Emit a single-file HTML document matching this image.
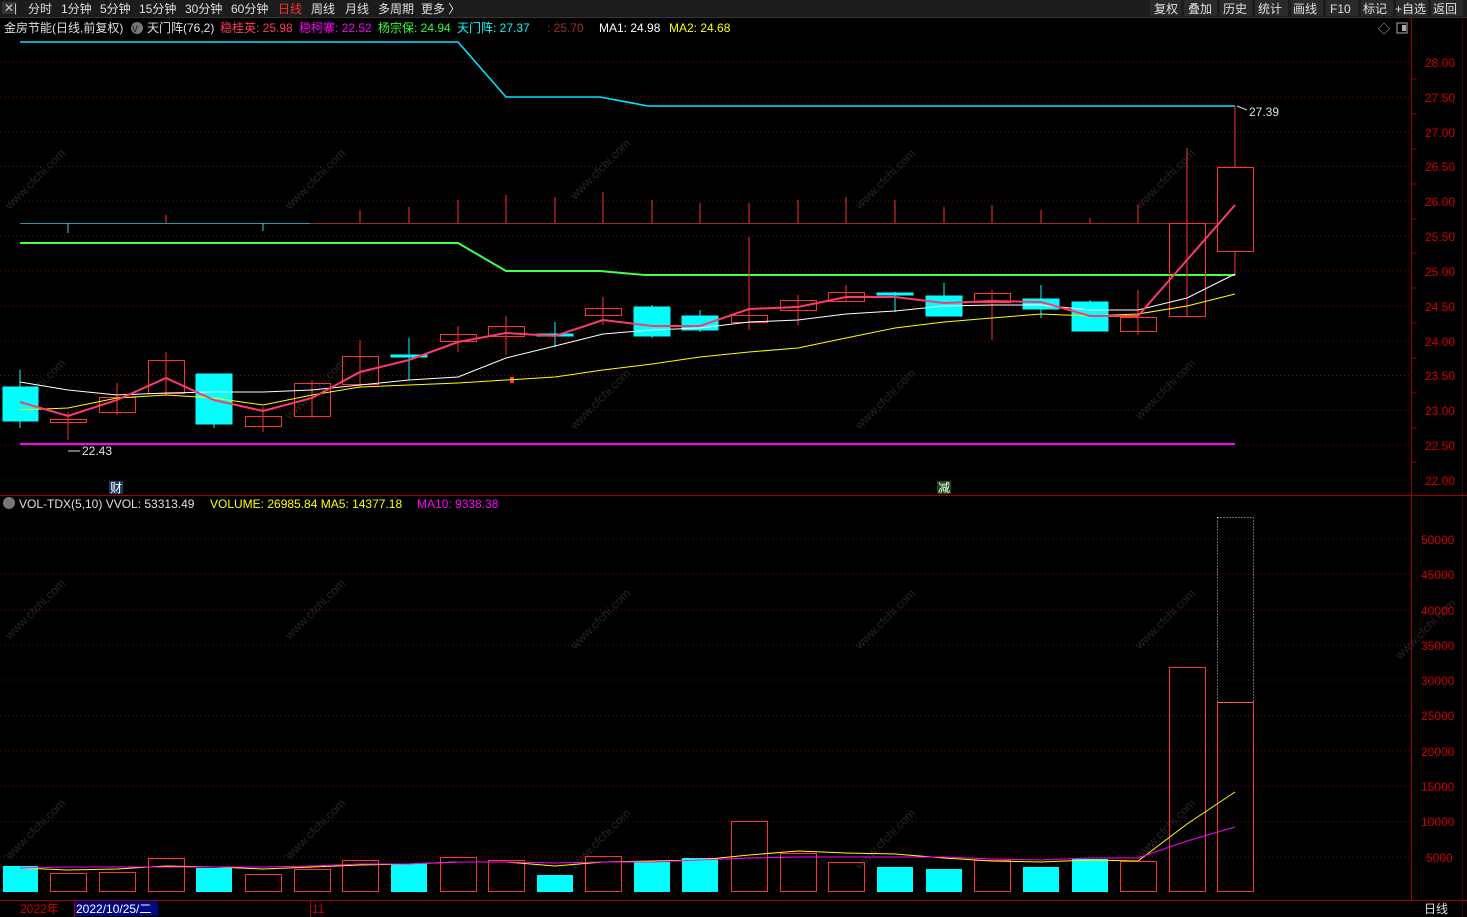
<!DOCTYPE html>
<html><head><meta charset="utf-8"><style>
body{margin:0;background:#000;width:1467px;height:917px;overflow:hidden;font-family:"Liberation Sans","Noto Sans CJK SC",sans-serif;}
svg{display:block}
text{font-family:"Liberation Sans","Noto Sans CJK SC",sans-serif;font-size:12px}
</style></head><body>
<svg width="1467" height="917" viewBox="0 0 1467 917" xmlns="http://www.w3.org/2000/svg">
<rect width="1467" height="917" fill="#000"/>
<!-- watermarks -->
<g fill="#262626" font-size="22">
<text transform="translate(10,210) rotate(-45)">www.cfchi.com</text>
<text transform="translate(290,210) rotate(-45)">www.cfchi.com</text>
<text transform="translate(575,200) rotate(-45)">www.cfchi.com</text>
<text transform="translate(860,210) rotate(-45)">www.cfchi.com</text>
<text transform="translate(1140,210) rotate(-45)">www.cfchi.com</text>
<text transform="translate(10,420) rotate(-45)">www.cfchi.com</text>
<text transform="translate(290,420) rotate(-45)">www.cfchi.com</text>
<text transform="translate(575,430) rotate(-45)">www.cfchi.com</text>
<text transform="translate(860,430) rotate(-45)">www.cfchi.com</text>
<text transform="translate(1140,420) rotate(-45)">www.cfchi.com</text>
<text transform="translate(10,640) rotate(-45)">www.cfchi.com</text>
<text transform="translate(290,640) rotate(-45)">www.cfchi.com</text>
<text transform="translate(575,650) rotate(-45)">www.cfchi.com</text>
<text transform="translate(860,650) rotate(-45)">www.cfchi.com</text>
<text transform="translate(1140,650) rotate(-45)">www.cfchi.com</text>
<text transform="translate(10,860) rotate(-45)">www.cfchi.com</text>
<text transform="translate(290,860) rotate(-45)">www.cfchi.com</text>
<text transform="translate(575,870) rotate(-45)">www.cfchi.com</text>
<text transform="translate(860,870) rotate(-45)">www.cfchi.com</text>
<text transform="translate(1140,860) rotate(-45)">www.cfchi.com</text>
<text transform="translate(1400,660) rotate(-45)">www.cfchi.com</text>
</g>
<!-- top bar -->
<rect x="0" y="0" width="1467" height="17" fill="#1c1c1c"/>
<rect x="2" y="2" width="14" height="12" fill="#333"/>
<text x="4" y="12" fill="#ccc" font-size="9">✕|</text>
<g fill="#e0e0e0" font-size="12.5">
<text x="28" y="13">分时</text><text x="61" y="13">1分钟</text><text x="100" y="13">5分钟</text><text x="139" y="13">15分钟</text><text x="185" y="13">30分钟</text><text x="231" y="13">60分钟</text>
<text x="278" y="13" fill="#ff3030">日线</text><text x="311" y="13">周线</text><text x="345" y="13">月线</text><text x="378" y="13">多周期</text><text x="421" y="13">更多 〉</text>
</g>
<g fill="#2a2a2a"><rect x="1150" y="0" width="31" height="16"/><rect x="1184" y="0" width="33" height="16"/><rect x="1220" y="0" width="32" height="16"/><rect x="1255" y="0" width="33" height="16"/><rect x="1291" y="0" width="32" height="16"/><rect x="1326" y="0" width="32" height="16"/><rect x="1361" y="0" width="32" height="16"/><rect x="1396" y="0" width="32" height="16"/><rect x="1431" y="0" width="32" height="16"/></g>
<g fill="#e0e0e0" font-size="12.5"><text x="1154" y="13">复权</text><text x="1188" y="13">叠加</text><text x="1223" y="13">历史</text><text x="1258" y="13">统计</text><text x="1293" y="13">画线</text><text x="1330" y="13">F10</text><text x="1363" y="13">标记</text><text x="1395" y="13">+自选</text><text x="1433" y="13">返回</text></g>
<!-- info line -->
<g font-size="12.5">
<text x="4" y="32" fill="#e0e0e0">金房节能(日线,前复权)</text>
<circle cx="137" cy="28" r="6" fill="#777"/><text x="132" y="32" fill="#222" font-size="9">v</text>
<text x="147" y="32" fill="#e0e0e0">天门阵(76,2)</text>
<text x="220" y="32" fill="#ff3a5a">稳桂英: 25.98</text>
<text x="299" y="32" fill="#ff00ff">稳柯寨: 22.52</text>
<text x="378" y="32" fill="#33ff33">杨宗保: 24.94</text>
<text x="457" y="32" fill="#00ffff">天门阵: 27.37</text>
<text x="547" y="32" fill="#a03030">: 25.70</text>
<text x="599" y="32" fill="#ffffff">MA1: 24.98</text>
<text x="669" y="32" fill="#ffff00">MA2: 24.68</text>
</g>
<text x="1378" y="33" fill="#aaa" font-size="12">◇</text>
<rect x="1397" y="23" width="10" height="10" fill="none" stroke="#aaa"/><rect x="1402" y="25" width="4" height="6" fill="#aaa"/>
<!-- axes -->
<line x1="1411.5" y1="17" x2="1411.5" y2="900" stroke="#a00000"/>
<line x1="1462.5" y1="17" x2="1462.5" y2="917" stroke="#400"/>
<line x1="0" y1="495.5" x2="1467" y2="495.5" stroke="#a00000"/>
<line x1="0" y1="900.5" x2="1467" y2="900.5" stroke="#a00000"/>
<line x1="0" y1="17.5" x2="1467" y2="17.5" stroke="#333"/>
<!-- price grid -->
<g stroke="#8a0000" stroke-dasharray="1,3">
<line x1="0" x2="1411" y1="62" y2="62"/><line x1="0" x2="1411" y1="97" y2="97"/><line x1="0" x2="1411" y1="132" y2="132"/><line x1="0" x2="1411" y1="166.5" y2="166.5"/><line x1="0" x2="1411" y1="201" y2="201"/><line x1="0" x2="1411" y1="236" y2="236"/><line x1="0" x2="1411" y1="271" y2="271"/><line x1="0" x2="1411" y1="306" y2="306"/><line x1="0" x2="1411" y1="341" y2="341"/><line x1="0" x2="1411" y1="375.5" y2="375.5"/><line x1="0" x2="1411" y1="410" y2="410"/><line x1="0" x2="1411" y1="445" y2="445"/><line x1="0" x2="1411" y1="480" y2="480"/>
<line x1="0" x2="1411" y1="539" y2="539"/><line x1="0" x2="1411" y1="574" y2="574"/><line x1="0" x2="1411" y1="610" y2="610"/><line x1="0" x2="1411" y1="645" y2="645"/><line x1="0" x2="1411" y1="680" y2="680"/><line x1="0" x2="1411" y1="715.5" y2="715.5"/><line x1="0" x2="1411" y1="751" y2="751"/><line x1="0" x2="1411" y1="786" y2="786"/><line x1="0" x2="1411" y1="821.5" y2="821.5"/><line x1="0" x2="1411" y1="857" y2="857"/>
</g>
<g fill="#d00000" font-size="12.5">
<text x="1425" y="67">28.00</text><text x="1425" y="102">27.50</text><text x="1425" y="137">27.00</text><text x="1425" y="171">26.50</text><text x="1425" y="206">26.00</text><text x="1425" y="241">25.50</text><text x="1425" y="276">25.00</text><text x="1425" y="311">24.50</text><text x="1425" y="346">24.00</text><text x="1425" y="380">23.50</text><text x="1425" y="415">23.00</text><text x="1425" y="450">22.50</text><text x="1425" y="485">22.00</text>
<text x="1421" y="544">50000</text><text x="1421" y="579">45000</text><text x="1421" y="615">40000</text><text x="1421" y="650">35000</text><text x="1421" y="685">30000</text><text x="1421" y="720">25000</text><text x="1421" y="756">20000</text><text x="1421" y="791">15000</text><text x="1421" y="826">10000</text><text x="1426" y="862">5000</text>
</g>
<g stroke="#a00000"><line x1="1411" x2="1416" y1="79" y2="79"/><line x1="1411" x2="1416" y1="114" y2="114"/><line x1="1411" x2="1416" y1="149" y2="149"/><line x1="1411" x2="1416" y1="184" y2="184"/><line x1="1411" x2="1416" y1="219" y2="219"/><line x1="1411" x2="1416" y1="253" y2="253"/><line x1="1411" x2="1416" y1="288" y2="288"/><line x1="1411" x2="1416" y1="323" y2="323"/><line x1="1411" x2="1416" y1="358" y2="358"/><line x1="1411" x2="1416" y1="393" y2="393"/><line x1="1411" x2="1416" y1="428" y2="428"/><line x1="1411" x2="1416" y1="462" y2="462"/></g>
<!-- indicator baseline and ticks -->
<line x1="20" y1="223.5" x2="310" y2="223.5" stroke="#2a9aa0"/>
<line x1="310" y1="223.5" x2="1235" y2="223.5" stroke="#a02a2a"/>
<g stroke="#ff3030">
<line x1="166" x2="166" y1="215" y2="223"/><line x1="360" x2="360" y1="210" y2="223"/><line x1="409" x2="409" y1="207" y2="223"/><line x1="458" x2="458" y1="200" y2="223"/><line x1="506" x2="506" y1="195" y2="223"/><line x1="555" x2="555" y1="197" y2="223"/><line x1="603" x2="603" y1="192" y2="223"/><line x1="652" x2="652" y1="200" y2="223"/><line x1="700" x2="700" y1="203" y2="223"/><line x1="749" x2="749" y1="203" y2="223"/><line x1="798" x2="798" y1="200" y2="223"/><line x1="846" x2="846" y1="197" y2="223"/><line x1="895" x2="895" y1="200" y2="223"/><line x1="944" x2="944" y1="207" y2="223"/><line x1="992" x2="992" y1="205" y2="223"/><line x1="1041" x2="1041" y1="210" y2="223"/><line x1="1090" x2="1090" y1="218" y2="223"/><line x1="1138" x2="1138" y1="205" y2="223"/><line x1="1187" x2="1187" y1="148" y2="223"/><line x1="1235" x2="1235" y1="106" y2="223"/>
</g>
<g stroke="#2adada"><line x1="68" x2="68" y1="223" y2="233"/><line x1="263" x2="263" y1="223" y2="231"/></g>
<!-- level lines -->
<polyline points="20,42 458,42 506,97 600,97 648,106 1235,106" fill="none" stroke="#00e5ff" stroke-width="1.6"/>
<polyline points="20,243 458,243 506,271 600,271 645,275 1235,275" fill="none" stroke="#44ff44" stroke-width="2"/>
<line x1="20" y1="444" x2="1235" y2="444" stroke="#ff00ff" stroke-width="2"/>
<!-- candles -->
<g stroke="#ff3232" fill="none">
<line x1="68" x2="68" y1="412" y2="440"/><rect x="50.5" y="419.5" width="36" height="3"/>
<line x1="117" x2="117" y1="383" y2="415"/><rect x="99.5" y="397.5" width="36" height="15"/>
<line x1="166" x2="166" y1="352" y2="395"/><rect x="148.5" y="360.5" width="36" height="33"/>
<line x1="263" x2="263" y1="407" y2="432"/><rect x="245.5" y="416.5" width="36" height="10"/>
<line x1="312" x2="312" y1="380" y2="418"/><rect x="294.5" y="383.5" width="36" height="33"/>
<line x1="360" x2="360" y1="340" y2="387"/><rect x="342.5" y="356.5" width="36" height="28"/>
<line x1="458" x2="458" y1="326" y2="352"/><rect x="440.5" y="334.5" width="36" height="7"/>
<line x1="506" x2="506" y1="316" y2="355"/><rect x="488.5" y="326.5" width="36" height="10"/>
<line x1="603" x2="603" y1="297" y2="325"/><rect x="585.5" y="308.5" width="36" height="7"/>
<line x1="749" x2="749" y1="237" y2="330"/><rect x="731.5" y="315.5" width="36" height="7"/>
<line x1="798" x2="798" y1="295" y2="325"/><rect x="780.5" y="300.5" width="36" height="10"/>
<line x1="846" x2="846" y1="285" y2="302"/><rect x="828.5" y="292.5" width="36" height="9"/>
<line x1="992" x2="992" y1="290" y2="340"/><rect x="974.5" y="293.5" width="36" height="9"/>
<line x1="1138" x2="1138" y1="290" y2="335"/><rect x="1120.5" y="317.5" width="36" height="14"/>
<line x1="1187" x2="1187" y1="148" y2="316"/><rect x="1169.5" y="223.5" width="36" height="93"/>
<line x1="1235" x2="1235" y1="106" y2="275"/><rect x="1217.5" y="167.5" width="36" height="84" fill="#000"/>
</g>
<g fill="#00ffff" stroke="#00ffff">
<line x1="20" x2="20" y1="370" y2="428"/><rect x="3" y="387" width="35" height="34"/>
<line x1="214" x2="214" y1="374" y2="428"/><rect x="196" y="374" width="36" height="50"/>
<line x1="409" x2="409" y1="338" y2="380"/><rect x="391" y="355" width="36" height="2"/>
<line x1="555" x2="555" y1="322" y2="347"/><rect x="537" y="334" width="36" height="2"/>
<line x1="652" x2="652" y1="305" y2="338"/><rect x="634" y="307" width="36" height="29"/>
<line x1="700" x2="700" y1="310" y2="332"/><rect x="682" y="316" width="36" height="14"/>
<line x1="895" x2="895" y1="292" y2="312"/><rect x="877" y="293" width="36" height="2"/>
<line x1="944" x2="944" y1="283" y2="316"/><rect x="926" y="296" width="36" height="20"/>
<line x1="1041" x2="1041" y1="285" y2="318"/><rect x="1023" y="299" width="36" height="10"/>
<line x1="1090" x2="1090" y1="300" y2="331"/><rect x="1072" y="302" width="36" height="29"/>
</g>
<rect x="510" y="377" width="4" height="6" fill="#ff3030"/>
<!-- lines -->
<polyline fill="none" stroke="#fff" stroke-width="1" points="20,382 68,390 117,395 166,393 214,392 263,392 312,390 360,385 409,380 458,377 506,358 555,346 603,334 652,330 700,328 749,322 798,320 846,314 895,311 944,306 992,305 1041,305 1090,310 1138,310 1187,298 1235,274"/>
<polyline fill="none" stroke="#ffff00" stroke-width="1" points="20,410 68,408 117,398 166,395 214,398 263,405 312,395 360,387 409,385 458,383 506,380 555,377 603,370 652,364 700,357 749,352 798,348 846,338 895,328 944,322 992,318 1041,314 1090,316 1138,314 1187,306 1235,294"/>
<polyline fill="none" stroke="#ff3a6a" stroke-width="2" points="20,402 68,416 117,400 166,378 214,400 263,411 312,398 360,372 409,360 458,342 506,333 555,336 603,320 652,326 700,326 749,309 798,307 846,297 895,297 944,303 992,301 1041,302 1090,316 1138,316 1187,260 1235,205"/>
<text x="1249" y="116" fill="#e0e0e0" font-size="12.5">27.39</text>
<line x1="1237" y1="106" x2="1247" y2="110" stroke="#ddd"/>
<text x="82" y="455" fill="#e0e0e0" font-size="12.5">22.43</text>
<line x1="68" y1="451" x2="80" y2="451" stroke="#ddd"/>
<rect x="109" y="481" width="14" height="13" fill="#1a3a6a"/><text x="110" y="492" fill="#fff">财</text>
<rect x="937" y="481" width="14" height="13" fill="#1a4a1a"/><text x="938" y="492" fill="#fff">减</text>
<!-- volume legend -->
<circle cx="9" cy="503" r="6" fill="#777"/>
<g font-size="12.5"><text x="19" y="508" fill="#e0e0e0">VOL-TDX(5,10)  VVOL: 53313.49</text>
<text x="210" y="508" fill="#ffff00">VOLUME: 26985.84  MA5: 14377.18</text>
<text x="417" y="508" fill="#ff00ff">MA10: 9338.38</text></g>
<!-- volume bars -->
<g fill="#00ffff">
<rect x="3" y="866" width="35" height="26"/><rect x="196" y="868" width="36" height="24"/><rect x="391" y="864" width="36" height="28"/><rect x="537" y="875" width="36" height="17"/><rect x="634" y="862" width="36" height="30"/><rect x="682" y="858" width="36" height="34"/><rect x="877" y="867" width="36" height="25"/><rect x="926" y="869" width="36" height="23"/><rect x="1023" y="867" width="36" height="25"/><rect x="1072" y="859" width="36" height="33"/>
</g>
<g fill="none" stroke="#ff3232">
<rect x="50.5" y="873.5" width="36" height="18"/><rect x="99.5" y="872.5" width="36" height="19"/><rect x="148.5" y="858.5" width="36" height="33"/><rect x="245.5" y="874.5" width="36" height="17"/><rect x="294.5" y="869.5" width="36" height="22"/><rect x="342.5" y="860.5" width="36" height="31"/><rect x="440.5" y="857.5" width="36" height="34"/><rect x="488.5" y="860.5" width="36" height="31"/><rect x="585.5" y="856.5" width="36" height="35"/><rect x="731.5" y="821.5" width="36" height="70"/><rect x="780.5" y="853.5" width="36" height="38"/><rect x="828.5" y="862.5" width="36" height="29"/><rect x="974.5" y="860.5" width="36" height="31"/><rect x="1120.5" y="861.5" width="36" height="30"/><rect x="1169.5" y="667.5" width="36" height="224"/><rect x="1217.5" y="702.5" width="36" height="189"/>
</g>
<rect x="1217.5" y="517.5" width="36" height="185" fill="none" stroke="#ccc" stroke-dasharray="1,2"/>
<polyline fill="none" stroke="#ffff00" points="20,868 68,870 117,869 166,866 214,867 263,869 312,867 360,865 409,864 458,862 506,862 555,866 603,862 652,861 700,860 749,855 798,851 846,853 895,854 944,858 992,861 1041,862 1090,860 1138,861 1187,824 1235,792"/>
<polyline fill="none" stroke="#ff00ff" points="20,868 68,867 117,867 166,867 214,867 263,867 312,866 360,864 409,864 458,862 506,862 555,863 603,862 652,862 700,860 749,858 798,857 846,857 895,857 944,857 992,859 1041,860 1090,858 1138,858 1187,841 1235,827"/>
<!-- date bar -->
<line x1="74.5" y1="900" x2="74.5" y2="917" stroke="#a00000"/><line x1="310.5" y1="900" x2="310.5" y2="917" stroke="#a00000"/>
<text x="20" y="913" fill="#d00000" font-size="12.5">2022年</text>
<rect x="75" y="901" width="83" height="15" fill="#000a80"/>
<text x="76" y="913" fill="#fff" font-size="12.5">2022/10/25/二</text>
<text x="312" y="913" fill="#d00000" font-size="12.5">11</text>
<text x="1424" y="913" fill="#e0e0e0" font-size="12.5">日线</text>
</svg>
</body></html>
